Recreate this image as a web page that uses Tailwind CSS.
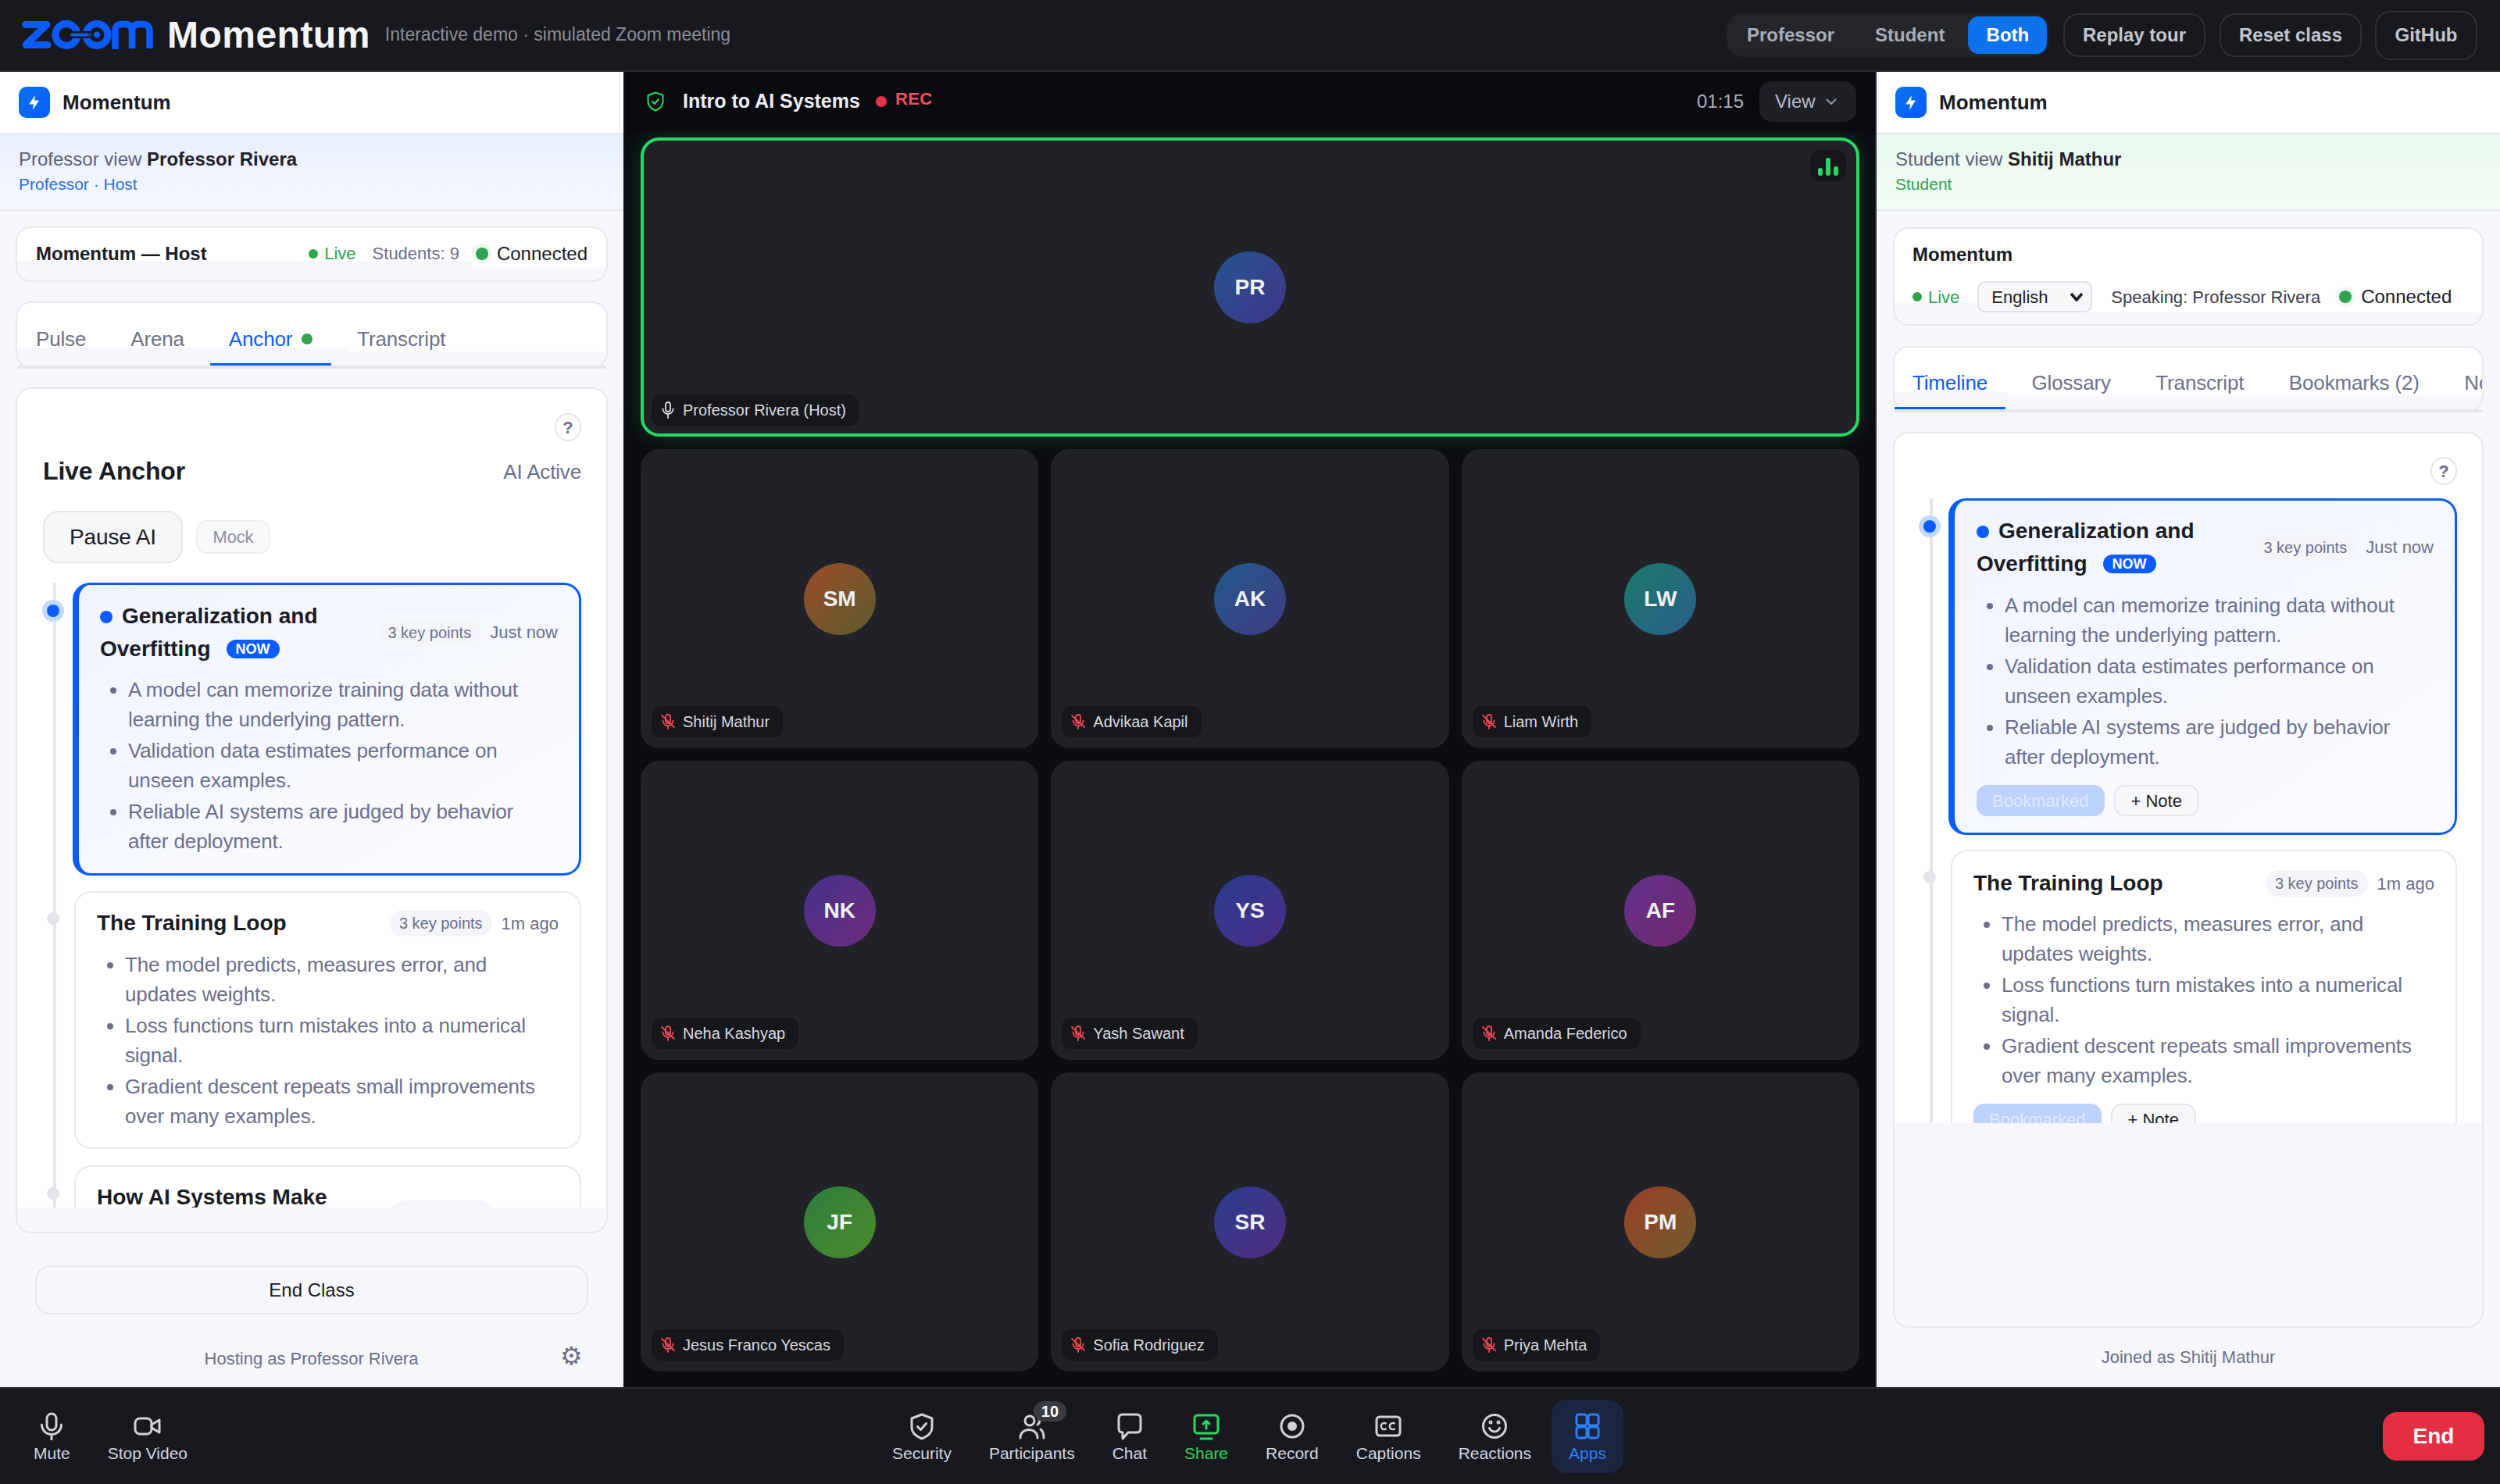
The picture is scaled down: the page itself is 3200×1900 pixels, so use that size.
<!DOCTYPE html>
<html lang="en">
<head>
<meta charset="utf-8">
<title>Momentum</title>
<script src="https://cdn.jsdelivr.net/npm/@tailwindcss/browser@4"></script>
</head>
<body class="[font-family:'Liberation_Sans',Arial,sans-serif] w-[3200px] h-[1900px] overflow-hidden bg-[#18191e]">
<div class="flex flex-col h-full">

<!-- top bar -->
<header class="h-[92px] shrink-0 border-b-2 border-[#2b2c32] bg-[#18191e] flex items-center justify-between pl-[28px] pr-[29px]">
  <div class="flex items-center">
    <svg class="w-[168px] h-[37px] -mt-[2px]" viewBox="0 0 168 37" fill="none" stroke="#0b5cff">
      <path d="M4.5 5.5H32L5 31.5H33" stroke-width="9" stroke-linejoin="round" stroke-linecap="round"/>
      <circle cx="57" cy="18.5" r="14" stroke-width="9"/>
      <circle cx="96" cy="18.5" r="14" stroke-width="9"/>
      <path d="M62 18.5H88" stroke="#18191e" stroke-width="9"/>
      <path d="M64 18.5H84" stroke-width="4" stroke-linecap="round"/>
      <path d="M87.5 16V21" stroke-width="1.5"/>
      <circle cx="96" cy="18.5" r="4" fill="#0b5cff" stroke="none"/>
      <path d="M119.5 37V13Q119.5 5 128 5H132Q141 5 141 14V36M141 14Q141 5 150 5H154.5Q163.5 5 163.5 14V36" stroke-width="8.5"/>
    </svg>
    <span class="ml-[18px] text-[48px] leading-[56px] font-bold tracking-[0.01em] text-[#f5f5f7]">Momentum</span>
    <span class="ml-[19px] text-[23px] leading-[32px] text-[#8a8e9a] -mt-[2px]">Interactive demo · simulated Zoom meeting</span>
  </div>
  <div class="flex items-center text-[24px] font-bold text-[#c3c6cf]">
    <div class="h-[56px] w-[414px] rounded-[20px] bg-[#24252b] border-2 border-[#1f2025] flex items-center text-[#a9adb8]">
      <span class="ml-[25px]">Professor</span>
      <span class="ml-[52px]">Student</span>
      <span class="ml-[30px] h-[48px] w-[101px] rounded-[14px] bg-[#0e72ed] text-white flex items-center justify-center">Both</span>
    </div>
    <div class="ml-[18px] h-[56px] w-[182px] rounded-[20px] border-2 border-[#2e3036] flex items-center justify-center">Replay tour</div>
    <div class="ml-[18px] h-[56px] w-[182px] rounded-[20px] border-2 border-[#2e3036] flex items-center justify-center">Reset class</div>
    <div class="ml-[17px] h-[63px] w-[131px] rounded-[20px] border-2 border-[#2e3036] flex items-center justify-center">GitHub</div>
  </div>
</header>

<main class="flex-1 min-h-0 flex">

<!-- left panel -->
<section class="w-[800px] shrink-0 border-r-2 border-[#101115] bg-[#f6f7fa] flex flex-col tracking-[-0.01em]">
  <div class="h-[80px] shrink-0 bg-white border-b-2 border-[#e6e8ee] flex items-center pl-[24px]">
    <div class="w-[40px] h-[40px] rounded-[10px] bg-gradient-to-br from-[#0e72ed] to-[#0b5cff]">
      <svg viewBox="0 0 40 40" class="w-[40px] h-[40px]"><polygon points="21,11 13,22.5 19,22.5 18,30 26,17.5 20,17.5" fill="#fff"/></svg>
    </div>
    <span class="ml-[16px] text-[26px] font-bold text-[#1a1c24] tracking-normal">Momentum</span>
  </div>
  <div class="h-[98px] shrink-0 bg-gradient-to-b from-[#e8effd] to-[#f5f8fe] border-b-2 border-[#e6e8ee] pl-[24px] pt-[16px] tracking-normal">
    <div class="text-[24px] leading-[32px] text-[#5c6078]">Professor view <b class="text-[#1f2129]">Professor Rivera</b></div>
    <div class="text-[21px] leading-[30px] mt-[1px] text-[#2f6fd8]">Professor · Host</div>
  </div>

  <div class="mx-[20px] mt-[20px] h-[71px] shrink-0 rounded-[20px] border-2 border-[#e6e8ec] [background:linear-gradient(#fff,#fff)_0_0/100%_42px_no-repeat,linear-gradient(#fff,#fff)_right_top/172px_52px_no-repeat,#f5f7fc] flex items-center pl-[24px] pb-[2px] tracking-normal">
    <b class="text-[24px] text-[#1a1c24]">Momentum — Host</b>
    <span class="ml-auto w-[12px] h-[12px] rounded-full bg-[#2ea44f]"></span>
    <span class="ml-[8px] text-[22px] text-[#2ea44f]">Live</span>
    <span class="ml-[21px] text-[22px] text-[#6b6f8c]">Students: 9</span>
    <span class="ml-[21px] w-[16px] h-[16px] rounded-full bg-[#2ea44f] shadow-[0_0_0_5px_rgba(46,164,79,0.08)]"></span>
    <span class="ml-[11px] mr-[24px] text-[24px] text-[#1a1c24]">Connected</span>
  </div>

  <div class="mx-[20px] mt-[25px] h-[86px] shrink-0 rounded-[20px] border-2 border-[#e6e8ec] [background:linear-gradient(#fff,#fff)_0_0/100%_57px_no-repeat,linear-gradient(#fff,#fff)_right_top/329px_62px_no-repeat,#f5f7fc]">
    <div class="h-[84px] border-b-4 border-[#e4e6ea] flex gap-[9px] text-[26px] text-[#6d7188]">
      <div class="h-[65px] mt-[15px] px-[24px] border-b-[3px] border-transparent flex items-center">Pulse</div>
      <div class="h-[65px] mt-[15px] px-[24px] border-b-[3px] border-transparent flex items-center">Arena</div>
      <div class="h-[65px] mt-[15px] px-[24px] border-b-[3px] border-[#0b5cff] flex items-center text-[#0b5cff]">Anchor<span class="ml-[12px] w-[14px] h-[14px] rounded-full bg-[#2ea44f]"></span></div>
      <div class="h-[65px] mt-[15px] px-[24px] border-b-[3px] border-transparent flex items-center">Transcript</div>
    </div>
  </div>

  <div class="mx-[20px] mt-[24px] h-[1083px] shrink-0 rounded-[20px] border-2 border-[#e6e8ec] bg-[#f5f7fc]">
    <div class="h-[1048px] overflow-hidden rounded-t-[18px] bg-white pl-[33px] pr-[32px] pt-[31px]">
      <div class="flex justify-end"><div class="w-[34px] h-[36px] rounded-full border-2 border-[#e4e6ea] flex items-center justify-center text-[22px] font-bold text-[#6b6f8c]">?</div></div>
      <div class="flex items-center justify-between mt-[16px] h-[44px]">
        <b class="text-[32px] text-[#1a1c24]">Live Anchor</b>
        <span class="text-[26px] text-[#6b6f8c] mt-[3px]">AI Active</span>
      </div>
      <div class="flex items-center mt-[29px] h-[67px]">
        <div class="w-[179px] h-[67px] rounded-[20px] border-2 border-[#e4e6ea] bg-[#f6f7f9] flex items-center justify-center text-[28px] text-[#1a1c24]">Pause AI</div>
        <div class="ml-[17px] -mt-[1px] w-[95px] h-[43px] rounded-[14px] border-2 border-[#eceef1] bg-[#f8f9fa] flex items-center justify-center text-[22px] text-[#8b8fa3]">Mock</div>
      </div>

      <div class="relative mt-[25px] pl-[38px]">
        <div class="absolute left-[13px] top-0 bottom-[-300px] w-[4px] bg-[#e4e6ea]"></div>
        <div class="absolute left-[5px] top-[28px] w-[16px] h-[16px] rounded-full bg-[#0b5cff] shadow-[0_0_0_6px_#c4d8ff]"></div>
        <div class="absolute left-[5px] top-[422px] w-[16px] h-[16px] rounded-full bg-[#e4e6ea]"></div>
        <div class="absolute left-[5px] top-[774px] w-[16px] h-[16px] rounded-full bg-[#e4e6ea]"></div>

        <article class="h-[375px] rounded-[22px] border-[3px] border-l-8 border-[#0b5cff] bg-gradient-to-br from-[#f0f4ff] to-[#fcfcff] pl-[27px] pr-[27px] pt-[19px]">
          <div class="flex items-center justify-between">
            <h3 class="w-[340px] text-[28px] leading-[41.5px] font-bold text-[#1a1c24] tracking-normal"><span class="inline-block w-[16px] h-[16px] rounded-full bg-[#0b5cff] mr-[12px]"></span>Generalization and Overfitting<span class="ml-[20px] inline-block align-[3px] h-[24px] leading-[24px] px-[12px] rounded-full bg-[#0b5cff] text-white text-[18px]">NOW</span></h3>
            <div class="flex items-center tracking-normal">
              <span class="h-[34px] flex items-center px-[12px] rounded-full bg-[#f4f5f9] text-[20px] text-[#6b6f8c]">3 key points</span>
              <span class="ml-[12px] text-[22px] text-[#6b6f8c]">Just now</span>
            </div>
          </div>
          <ul class="list-disc pl-[36px] mt-[13px] space-y-[2px] text-[26px] leading-[38px] tracking-[-0.005em] text-[#6b6f8c]">
            <li>A model can memorize training data without learning the underlying pattern.</li>
            <li>Validation data estimates performance on unseen examples.</li>
            <li>Reliable AI systems are judged by behavior after deployment.</li>
          </ul>
        </article>

        <article class="ml-[2px] mt-[20px] h-[330px] rounded-[22px] border-2 border-[#e6e8ec] bg-white px-[27px] pt-[18px]">
          <div class="flex items-center justify-between h-[42px]">
            <h3 class="text-[28px] leading-[41.5px] font-bold text-[#1a1c24] tracking-normal">The Training Loop</h3>
            <div class="flex items-center tracking-normal">
              <span class="h-[34px] flex items-center px-[12px] rounded-full bg-[#f4f5f9] text-[20px] text-[#6b6f8c]">3 key points</span>
              <span class="ml-[12px] text-[22px] text-[#6b6f8c]">1m ago</span>
            </div>
          </div>
          <ul class="list-disc pl-[36px] mt-[13px] space-y-[2px] text-[26px] leading-[38px] tracking-[-0.005em] text-[#6b6f8c]">
            <li>The model predicts, measures error, and updates weights.</li>
            <li>Loss functions turn mistakes into a numerical signal.</li>
            <li>Gradient descent repeats small improvements over many examples.</li>
          </ul>
        </article>

        <article class="ml-[2px] mt-[21px] h-[200px] rounded-[22px] border-2 border-[#e6e8ec] bg-white px-[27px] pt-[18px]">
          <div class="flex items-center justify-between">
            <h3 class="w-[340px] text-[28px] leading-[41.5px] font-bold text-[#1a1c24] tracking-normal">How AI Systems Make Decisions</h3>
            <div class="flex items-center tracking-normal">
              <span class="h-[34px] flex items-center px-[12px] rounded-full bg-[#f4f5f9] text-[20px] text-[#6b6f8c]">3 key points</span>
              <span class="ml-[12px] text-[22px] text-[#6b6f8c]">2m ago</span>
            </div>
          </div>
        </article>
      </div>
    </div>
  </div>

  <div class="mx-[45px] mt-[41px] h-[63px] shrink-0 w-[708px] rounded-[20px] border-2 border-[#e4e6ea] flex items-center justify-center text-[24px] text-[#1a1c24] tracking-normal">End Class</div>
  <div class="relative mt-[41px] h-[30px] shrink-0 flex items-center justify-center text-[22px] text-[#6b6f8c] tracking-normal">
    <span class="-ml-[1px]">Hosting as Professor Rivera</span>
    <span class="absolute left-[717px] -top-[6px] text-[32px] leading-[36px] text-[#6b6f8c] [font-family:'DejaVu_Sans',sans-serif]">⚙</span>
  </div>
</section>

<!-- centre -->
<section class="w-[1600px] shrink-0 bg-[#0c0d11] flex flex-col">
  <div class="relative z-10 h-[76px] shrink-0 bg-[#0a0b0f] flex items-center pl-[28px] pr-[24px]">
    <svg class="w-[22px] h-[26px]" viewBox="0 0 22 26" fill="none" stroke="#26d962" stroke-width="2" stroke-linecap="round" stroke-linejoin="round"><path d="M11 1.5 20.5 5V13C20.500 19 15 23 11 24.500 7 23 1.500 19 1.500 13V5Z"/><path d="M7 13l3 3 5-6"/></svg>
    <b class="ml-[24px] text-[25px] text-[#eceef3]">Intro to AI Systems</b>
    <span class="ml-[20px] w-[14px] h-[14px] rounded-full bg-[#e5344a]"></span>
    <b class="ml-[11px] -mt-[7px] text-[22px] tracking-[0.02em] text-[#f0505f]">REC</b>
    <span class="ml-auto text-[24px] text-[#aab0c0]">01:15</span>
    <div class="ml-[20px] w-[124px] h-[52px] rounded-[16px] bg-[#1f2026] flex items-center pl-[20px] text-[24px] text-[#b5bbcc]">View
      <svg class="ml-[13px] w-[14px] h-[8px]" viewBox="0 0 14 8" fill="none" stroke="#9aa0b0" stroke-width="1.800"><path d="M1 1l6 6 6-6"/></svg>
    </div>
  </div>
  <div class="flex-1 min-h-0 px-[20px] pt-[8px] grid grid-cols-3 grid-rows-4 gap-[16px] pb-[20px]">
    <div class="col-span-3 relative rounded-[24px] border-4 border-[#26d962] bg-[#212228] shadow-[0_0_28px_rgba(38,217,98,0.18)] flex items-center justify-center">
      <div class="w-[92px] h-[92px] rounded-full bg-gradient-to-br from-[#1f5590] to-[#3d3488] flex items-center justify-center text-[28px] font-bold text-[#f0f1f5]">PR</div>
      <div class="absolute right-[13px] top-[12px] w-[46px] h-[40px] rounded-[12px] bg-[#16171b] flex items-end justify-center gap-[4px] pb-[7px]">
        <i class="w-[6px] h-[10px] rounded-full bg-[#26d962]"></i><i class="w-[6px] h-[23px] rounded-full bg-[#26d962]"></i><i class="w-[6px] h-[12px] rounded-full bg-[#26d962]"></i>
      </div>
      <div class="absolute left-[10px] bottom-[10px] h-[40px] rounded-[12px] bg-[#16171b] flex items-center pl-[13px] pr-[16px] text-[20px] text-[#d9dbe0]">
        <svg class="w-[16px] h-[22px]" viewBox="0 0 16 22" fill="none" stroke="#d9dbe0" stroke-width="1.800" stroke-linecap="round"><rect x="5" y="1" width="6" height="12" rx="3"/><path d="M1.500 9.500a6.500 6.500 0 0 0 13 0M8 16v5"/></svg>
        <span class="ml-[11px]">Professor Rivera (Host)</span>
      </div>
    </div>

    <div class="relative rounded-[24px] bg-[#212228] flex items-center justify-center">
      <div class="w-[92px] h-[92px] rounded-full bg-gradient-to-br from-[#9a4a26] to-[#5a5a2e] flex items-center justify-center text-[28px] font-bold text-[#f0f1f5]">SM</div>
      <div class="absolute left-[14px] bottom-[14px] h-[40px] rounded-[12px] bg-[#16171b] flex items-center pl-[12px] pr-[17px] text-[20px] text-[#d9dbe0]">
        <svg class="w-[18px] h-[20px]" viewBox="0 0 18 20" fill="none" stroke="#ef4a56" stroke-width="1.800" stroke-linecap="round"><rect x="6" y="1" width="6" height="11" rx="3"/><path d="M2.500 8.500a6.500 6.500 0 0 0 13 0M9 15v4M1 2l16 15"/></svg>
        <span class="ml-[10px]">Shitij Mathur</span>
      </div>
    </div>
    <div class="relative rounded-[24px] bg-[#212228] flex items-center justify-center">
      <div class="w-[92px] h-[92px] rounded-full bg-gradient-to-br from-[#1a5a8e] to-[#3d3a7e] flex items-center justify-center text-[28px] font-bold text-[#f0f1f5]">AK</div>
      <div class="absolute left-[14px] bottom-[14px] h-[40px] rounded-[12px] bg-[#16171b] flex items-center pl-[12px] pr-[17px] text-[20px] text-[#d9dbe0]">
        <svg class="w-[18px] h-[20px]" viewBox="0 0 18 20" fill="none" stroke="#ef4a56" stroke-width="1.800" stroke-linecap="round"><rect x="6" y="1" width="6" height="11" rx="3"/><path d="M2.500 8.500a6.500 6.500 0 0 0 13 0M9 15v4M1 2l16 15"/></svg>
        <span class="ml-[10px]">Advikaa Kapil</span>
      </div>
    </div>
    <div class="relative rounded-[24px] bg-[#212228] flex items-center justify-center">
      <div class="w-[92px] h-[92px] rounded-full bg-gradient-to-br from-[#1c7a66] to-[#2a5c8c] flex items-center justify-center text-[28px] font-bold text-[#f0f1f5]">LW</div>
      <div class="absolute left-[14px] bottom-[14px] h-[40px] rounded-[12px] bg-[#16171b] flex items-center pl-[12px] pr-[17px] text-[20px] text-[#d9dbe0]">
        <svg class="w-[18px] h-[20px]" viewBox="0 0 18 20" fill="none" stroke="#ef4a56" stroke-width="1.800" stroke-linecap="round"><rect x="6" y="1" width="6" height="11" rx="3"/><path d="M2.500 8.500a6.500 6.500 0 0 0 13 0M9 15v4M1 2l16 15"/></svg>
        <span class="ml-[10px]">Liam Wirth</span>
      </div>
    </div>

    <div class="relative rounded-[24px] bg-[#212228] flex items-center justify-center">
      <div class="w-[92px] h-[92px] rounded-full bg-gradient-to-br from-[#43308e] to-[#6e2a78] flex items-center justify-center text-[28px] font-bold text-[#f0f1f5]">NK</div>
      <div class="absolute left-[14px] bottom-[14px] h-[40px] rounded-[12px] bg-[#16171b] flex items-center pl-[12px] pr-[17px] text-[20px] text-[#d9dbe0]">
        <svg class="w-[18px] h-[20px]" viewBox="0 0 18 20" fill="none" stroke="#ef4a56" stroke-width="1.800" stroke-linecap="round"><rect x="6" y="1" width="6" height="11" rx="3"/><path d="M2.500 8.500a6.500 6.500 0 0 0 13 0M9 15v4M1 2l16 15"/></svg>
        <span class="ml-[10px]">Neha Kashyap</span>
      </div>
    </div>
    <div class="relative rounded-[24px] bg-[#212228] flex items-center justify-center">
      <div class="w-[92px] h-[92px] rounded-full bg-gradient-to-br from-[#263c8e] to-[#4a2c88] flex items-center justify-center text-[28px] font-bold text-[#f0f1f5]">YS</div>
      <div class="absolute left-[14px] bottom-[14px] h-[40px] rounded-[12px] bg-[#16171b] flex items-center pl-[12px] pr-[17px] text-[20px] text-[#d9dbe0]">
        <svg class="w-[18px] h-[20px]" viewBox="0 0 18 20" fill="none" stroke="#ef4a56" stroke-width="1.800" stroke-linecap="round"><rect x="6" y="1" width="6" height="11" rx="3"/><path d="M2.500 8.500a6.500 6.500 0 0 0 13 0M9 15v4M1 2l16 15"/></svg>
        <span class="ml-[10px]">Yash Sawant</span>
      </div>
    </div>
    <div class="relative rounded-[24px] bg-[#212228] flex items-center justify-center">
      <div class="w-[92px] h-[92px] rounded-full bg-gradient-to-br from-[#63308e] to-[#70286c] flex items-center justify-center text-[28px] font-bold text-[#f0f1f5]">AF</div>
      <div class="absolute left-[14px] bottom-[14px] h-[40px] rounded-[12px] bg-[#16171b] flex items-center pl-[12px] pr-[17px] text-[20px] text-[#d9dbe0]">
        <svg class="w-[18px] h-[20px]" viewBox="0 0 18 20" fill="none" stroke="#ef4a56" stroke-width="1.800" stroke-linecap="round"><rect x="6" y="1" width="6" height="11" rx="3"/><path d="M2.500 8.500a6.500 6.500 0 0 0 13 0M9 15v4M1 2l16 15"/></svg>
        <span class="ml-[10px]">Amanda Federico</span>
      </div>
    </div>

    <div class="relative rounded-[24px] bg-[#212228] flex items-center justify-center">
      <div class="w-[92px] h-[92px] rounded-full bg-gradient-to-br from-[#2a7f3c] to-[#4c8a2a] flex items-center justify-center text-[28px] font-bold text-[#f0f1f5]">JF</div>
      <div class="absolute left-[14px] bottom-[14px] h-[40px] rounded-[12px] bg-[#16171b] flex items-center pl-[12px] pr-[17px] text-[20px] text-[#d9dbe0]">
        <svg class="w-[18px] h-[20px]" viewBox="0 0 18 20" fill="none" stroke="#ef4a56" stroke-width="1.800" stroke-linecap="round"><rect x="6" y="1" width="6" height="11" rx="3"/><path d="M2.500 8.500a6.500 6.500 0 0 0 13 0M9 15v4M1 2l16 15"/></svg>
        <span class="ml-[10px]">Jesus Franco Yescas</span>
      </div>
    </div>
    <div class="relative rounded-[24px] bg-[#212228] flex items-center justify-center">
      <div class="w-[92px] h-[92px] rounded-full bg-gradient-to-br from-[#263c8e] to-[#4f2c80] flex items-center justify-center text-[28px] font-bold text-[#f0f1f5]">SR</div>
      <div class="absolute left-[14px] bottom-[14px] h-[40px] rounded-[12px] bg-[#16171b] flex items-center pl-[12px] pr-[17px] text-[20px] text-[#d9dbe0]">
        <svg class="w-[18px] h-[20px]" viewBox="0 0 18 20" fill="none" stroke="#ef4a56" stroke-width="1.800" stroke-linecap="round"><rect x="6" y="1" width="6" height="11" rx="3"/><path d="M2.500 8.500a6.500 6.500 0 0 0 13 0M9 15v4M1 2l16 15"/></svg>
        <span class="ml-[10px]">Sofia Rodriguez</span>
      </div>
    </div>
    <div class="relative rounded-[24px] bg-[#212228] flex items-center justify-center">
      <div class="w-[92px] h-[92px] rounded-full bg-gradient-to-br from-[#9a3e26] to-[#6e5a2a] flex items-center justify-center text-[28px] font-bold text-[#f0f1f5]">PM</div>
      <div class="absolute left-[14px] bottom-[14px] h-[40px] rounded-[12px] bg-[#16171b] flex items-center pl-[12px] pr-[17px] text-[20px] text-[#d9dbe0]">
        <svg class="w-[18px] h-[20px]" viewBox="0 0 18 20" fill="none" stroke="#ef4a56" stroke-width="1.800" stroke-linecap="round"><rect x="6" y="1" width="6" height="11" rx="3"/><path d="M2.500 8.500a6.500 6.500 0 0 0 13 0M9 15v4M1 2l16 15"/></svg>
        <span class="ml-[10px]">Priya Mehta</span>
      </div>
    </div>
  </div>
</section>

<!-- right panel -->
<section class="w-[800px] shrink-0 border-l-2 border-[#2b2c32] bg-[#f6f7fa] flex flex-col tracking-[-0.01em]">
  <div class="h-[80px] shrink-0 bg-white border-b-2 border-[#e6e8ee] flex items-center pl-[24px]">
    <div class="w-[40px] h-[40px] rounded-[10px] bg-gradient-to-br from-[#0e72ed] to-[#0b5cff]">
      <svg viewBox="0 0 40 40" class="w-[40px] h-[40px]"><polygon points="21,11 13,22.5 19,22.5 18,30 26,17.5 20,17.5" fill="#fff"/></svg>
    </div>
    <span class="ml-[16px] text-[26px] font-bold text-[#1a1c24] tracking-normal">Momentum</span>
  </div>
  <div class="h-[98px] shrink-0 bg-gradient-to-b from-[#e8f9ef] to-[#f3fcf6] border-b-2 border-[#e6e8ee] pl-[24px] pt-[16px] tracking-normal">
    <div class="text-[24px] leading-[32px] text-[#5c6078]">Student view <b class="text-[#1f2129]">Shitij Mathur</b></div>
    <div class="text-[21px] leading-[30px] mt-[1px] text-[#2ea44f]">Student</div>
  </div>

  <div class="mx-[21px] mt-[21px] h-[126px] shrink-0 rounded-[20px] border-2 border-[#e6e8ec] [background:linear-gradient(#fff,#fff)_0_0/100%_94px_no-repeat,linear-gradient(#fff,#fff)_right_top/647px_107px_no-repeat,#f5f7fc] pl-[23px] tracking-normal">
    <b class="block mt-[18px] text-[24px] leading-[30px] text-[#1a1c24]">Momentum</b>
    <div class="flex items-center mt-[19px] h-[40px]">
      <span class="w-[12px] h-[12px] rounded-full bg-[#2ea44f]"></span>
      <span class="ml-[8px] text-[22px] text-[#2ea44f]">Live</span>
      <div class="ml-[23px] w-[147px] h-[40px] rounded-[10px] border-2 border-[#dfe1e6] bg-[#f6f7f9] flex items-center pl-[16px] text-[22px] text-[#1a1c24]">English
        <svg class="ml-auto mr-[9px] w-[18px] h-[12px]" viewBox="0 0 18 12" fill="none" stroke="#1a1c24" stroke-width="3.500"><path d="M2 2l7 8 7-8"/></svg>
      </div>
      <span class="ml-[24px] text-[22px] text-[#3a3d4c]">Speaking: Professor Rivera</span>
      <span class="ml-[24px] w-[16px] h-[16px] rounded-full bg-[#2ea44f] shadow-[0_0_0_5px_rgba(46,164,79,0.08)]"></span>
      <span class="ml-[12px] text-[24px] text-[#1a1c24]">Connected</span>
    </div>
  </div>

  <div class="mx-[21px] mt-[26px] h-[84px] shrink-0 rounded-[20px] border-2 border-[#e6e8ec] [background:linear-gradient(#fff,#fff)_0_0/100%_57px_no-repeat,linear-gradient(#fff,#fff)_right_top/607px_61px_no-repeat,#f5f7fc]">
    <div class="h-[83px] border-b-4 border-[#e4e6ea] flex gap-[9.5px] text-[26px] text-[#6d7188] overflow-hidden">
      <div class="shrink-0 h-[64px] mt-[15px] px-[23px] border-b-[3px] border-[#0b5cff] flex items-center text-[#0b5cff]">Timeline</div>
      <div class="shrink-0 h-[64px] mt-[15px] px-[24px] border-b-[3px] border-transparent flex items-center">Glossary</div>
      <div class="shrink-0 h-[64px] mt-[15px] px-[24px] border-b-[3px] border-transparent flex items-center">Transcript</div>
      <div class="shrink-0 h-[64px] mt-[15px] px-[24px] border-b-[3px] border-transparent flex items-center">Bookmarks (2)</div>
      <div class="shrink-0 h-[64px] mt-[15px] px-[24px] border-b-[3px] border-transparent flex items-center">Notes</div>
    </div>
  </div>

  <div class="mx-[21px] mt-[26px] h-[1147px] shrink-0 rounded-[20px] border-2 border-[#e6e8ec] bg-[#f5f7fc]">
    <div class="h-[883px] overflow-hidden rounded-t-[18px] bg-white pl-[33px] pr-[32px] pt-[30px]">
      <div class="flex justify-end"><div class="w-[34px] h-[36px] rounded-full border-2 border-[#e4e6ea] flex items-center justify-center text-[22px] font-bold text-[#6b6f8c]">?</div></div>
      <div class="relative mt-[17px] pl-[36px]">
        <div class="absolute left-[12px] top-0 bottom-[-300px] w-[4px] bg-[#e4e6ea]"></div>
        <div class="absolute left-[4px] top-[28px] w-[16px] h-[16px] rounded-full bg-[#0b5cff] shadow-[0_0_0_6px_#c4d8ff]"></div>
        <div class="absolute left-[4px] top-[477px] w-[16px] h-[16px] rounded-full bg-[#e4e6ea]"></div>

        <article class="h-[431px] rounded-[22px] border-[3px] border-l-8 border-[#0b5cff] bg-gradient-to-br from-[#f0f4ff] to-[#fcfcff] pl-[28px] pr-[27px] pt-[18px]">
          <div class="flex items-center justify-between">
            <h3 class="w-[340px] text-[28px] leading-[41.5px] font-bold text-[#1a1c24] tracking-normal"><span class="inline-block w-[16px] h-[16px] rounded-full bg-[#0b5cff] mr-[12px]"></span>Generalization and Overfitting<span class="ml-[20px] inline-block align-[3px] h-[24px] leading-[24px] px-[12px] rounded-full bg-[#0b5cff] text-white text-[18px]">NOW</span></h3>
            <div class="flex items-center tracking-normal">
              <span class="h-[34px] flex items-center px-[12px] rounded-full bg-[#f4f5f9] text-[20px] text-[#6b6f8c]">3 key points</span>
              <span class="ml-[12px] text-[22px] text-[#6b6f8c]">Just now</span>
            </div>
          </div>
          <ul class="list-disc pl-[36px] mt-[14px] space-y-[2px] text-[26px] leading-[38px] tracking-[-0.005em] text-[#6b6f8c]">
            <li>A model can memorize training data without learning the underlying pattern.</li>
            <li>Validation data estimates performance on unseen examples.</li>
            <li>Reliable AI systems are judged by behavior after deployment.</li>
          </ul>
          <div class="flex mt-[17px] gap-[12px] text-[22px] tracking-normal">
            <span class="h-[40px] px-[20px] rounded-[14px] bg-[#bdd2ff] text-[#e2ebff] flex items-center">Bookmarked</span>
            <span class="h-[40px] px-[20px] rounded-[14px] border-2 border-[#e4e6ea] bg-[#f6f7f9] text-[#1a1c24] flex items-center">+ Note</span>
          </div>
        </article>

        <article class="ml-[3px] mt-[19px] h-[400px] rounded-[22px] border-2 border-[#e6e8ec] bg-white px-[27px] pt-[20px]">
          <div class="flex items-center justify-between h-[42px]">
            <h3 class="text-[28px] leading-[41.5px] font-bold text-[#1a1c24] tracking-normal">The Training Loop</h3>
            <div class="flex items-center tracking-normal">
              <span class="h-[34px] flex items-center px-[12px] rounded-full bg-[#f4f5f9] text-[20px] text-[#6b6f8c]">3 key points</span>
              <span class="ml-[12px] text-[22px] text-[#6b6f8c]">1m ago</span>
            </div>
          </div>
          <ul class="list-disc pl-[36px] mt-[12px] space-y-[2px] text-[26px] leading-[38px] tracking-[-0.005em] text-[#6b6f8c]">
            <li>The model predicts, measures error, and updates weights.</li>
            <li>Loss functions turn mistakes into a numerical signal.</li>
            <li>Gradient descent repeats small improvements over many examples.</li>
          </ul>
          <div class="flex mt-[17px] gap-[12px] text-[22px] tracking-normal">
            <span class="h-[40px] px-[20px] rounded-[14px] bg-[#bdd2ff] text-[#e2ebff] flex items-center">Bookmarked</span>
            <span class="h-[40px] px-[20px] rounded-[14px] border-2 border-[#e4e6ea] bg-[#f6f7f9] text-[#1a1c24] flex items-center">+ Note</span>
          </div>
        </article>
      </div>
    </div>
  </div>
  <div class="mt-[23px] text-center text-[22px] leading-[30px] text-[#6b6f8c] tracking-normal">Joined as Shitij Mathur</div>
</section>
</main>

<!-- bottom bar -->
<footer class="h-[124px] shrink-0 border-t-2 border-[#2b2c32] bg-[#18191e] grid grid-cols-[1fr_auto_1fr] items-center text-[21px] leading-[26px] text-[#d2d6e2]">
  <div class="flex pl-[21px] gap-[4px]">
    <div class="h-[94px] px-[22px] pt-[16px] flex flex-col items-center">
      <svg class="w-[36px] h-[36px] mb-[4px]" viewBox="0 0 36 36" fill="none" stroke="#d1d2d8" stroke-width="3" stroke-linecap="round"><rect x="12" y="2" width="12" height="21" rx="6"/><path d="M5.500 16a12.500 12.500 0 0 0 25 0M18 28.500V35"/></svg>
      <span>Mute</span>
    </div>
    <div class="h-[94px] px-[22px] pt-[16px] flex flex-col items-center">
      <svg class="w-[36px] h-[36px] mb-[4px]" viewBox="0 0 36 36" fill="none" stroke="#d1d2d8" stroke-width="3" stroke-linejoin="round"><rect x="2" y="8" width="21" height="20" rx="6"/><path d="M23 16l10-6v16l-10-6z"/></svg>
      <span>Stop Video</span>
    </div>
  </div>
  <div class="flex gap-[4px] -ml-[2px]">
    <div class="h-[94px] px-[22px] pt-[16px] flex flex-col items-center">
      <svg class="w-[36px] h-[36px] mb-[4px]" viewBox="0 0 36 36" fill="none" stroke="#d1d2d8" stroke-width="3" stroke-linecap="round" stroke-linejoin="round"><path d="M18 3 31 8V20C31 26 25 31 18 34 11 31 5 26 5 20V8Z"/><path d="M12.500 18.500l4 4 7-8"/></svg>
      <span>Security</span>
    </div>
    <div class="relative h-[94px] px-[22px] pt-[16px] flex flex-col items-center">
      <svg class="w-[36px] h-[36px] mb-[4px]" viewBox="0 0 36 36" fill="none" stroke="#d1d2d8" stroke-width="3" stroke-linecap="round"><circle cx="15" cy="11" r="6"/><path d="M3 33c0-14 22-14 22 0M25 6a6 6 0 0 1 0 10M29 22c3 2 4 6 4 11"/></svg>
      <span>Participants</span>
      <span class="absolute left-[79px] top-[2px] w-[42px] h-[26px] rounded-full bg-[#3a3b42] text-white font-bold text-[20px] leading-[26px] text-center">10</span>
    </div>
    <div class="h-[94px] px-[22px] pt-[16px] flex flex-col items-center">
      <svg class="w-[36px] h-[36px] mb-[4px]" viewBox="0 0 36 36" fill="none" stroke="#d1d2d8" stroke-width="3" stroke-linejoin="round"><path d="M9 3H27Q32 3 32 8V21Q32 26 27 26H16L9 34V26Q4 26 4 21V8Q4 3 9 3Z"/></svg>
      <span>Chat</span>
    </div>
    <div class="h-[94px] px-[22px] pt-[16px] flex flex-col items-center text-[#26d962]">
      <svg class="w-[36px] h-[36px] mb-[4px]" viewBox="0 0 36 36" fill="none" stroke="#26d962" stroke-width="3" stroke-linecap="round" stroke-linejoin="round"><rect x="3" y="4" width="30" height="23" rx="4"/><path d="M18 21V11M14 15l4-4 4 4M11 34H25"/></svg>
      <span>Share</span>
    </div>
    <div class="h-[94px] px-[22px] pt-[16px] flex flex-col items-center">
      <svg class="w-[36px] h-[36px] mb-[4px]" viewBox="0 0 36 36" fill="none" stroke="#d1d2d8" stroke-width="3"><circle cx="18" cy="18" r="14"/><circle cx="18" cy="18" r="6" fill="#d1d2d8" stroke="none"/></svg>
      <span>Record</span>
    </div>
    <div class="h-[94px] px-[22px] pt-[16px] flex flex-col items-center">
      <svg class="w-[36px] h-[36px] mb-[4px]" viewBox="0 0 36 36" fill="none" stroke="#d1d2d8" stroke-width="3"><rect x="3" y="6" width="30" height="24" rx="4"/><path d="M15.500 15a4 4 0 1 0 0 6M26.500 15a4 4 0 1 0 0 6" stroke-width="2.500"/></svg>
      <span>Captions</span>
    </div>
    <div class="h-[94px] px-[22px] pt-[16px] flex flex-col items-center">
      <svg class="w-[36px] h-[36px] mb-[4px]" viewBox="0 0 36 36" fill="none" stroke="#d1d2d8" stroke-width="3" stroke-linecap="round"><circle cx="18" cy="18" r="14.500"/><path d="M11.500 20.500a7 7 0 0 0 13 0"/><circle cx="13" cy="13" r="1" /><circle cx="23" cy="13" r="1"/></svg>
      <span>Reactions</span>
    </div>
    <div class="h-[94px] px-[22px] pt-[16px] flex flex-col items-center rounded-[20px] bg-[#1a2640] text-[#2d7ff9]">
      <svg class="w-[36px] h-[36px] mb-[4px]" viewBox="0 0 36 36" fill="none" stroke="#2d7ff9" stroke-width="3"><rect x="4" y="3" width="13" height="14" rx="3"/><rect x="19" y="3" width="13" height="14" rx="3"/><rect x="4" y="19" width="13" height="14" rx="3"/><rect x="19" y="19" width="13" height="14" rx="3"/></svg>
      <span>Apps</span>
    </div>
  </div>
  <div class="flex justify-end pr-[20px]">
    <div class="w-[130px] h-[62px] rounded-[18px] bg-[#e32f41] flex items-center justify-center text-[28px] font-bold text-white">End</div>
  </div>
</footer>
</div>
</body>
</html>
